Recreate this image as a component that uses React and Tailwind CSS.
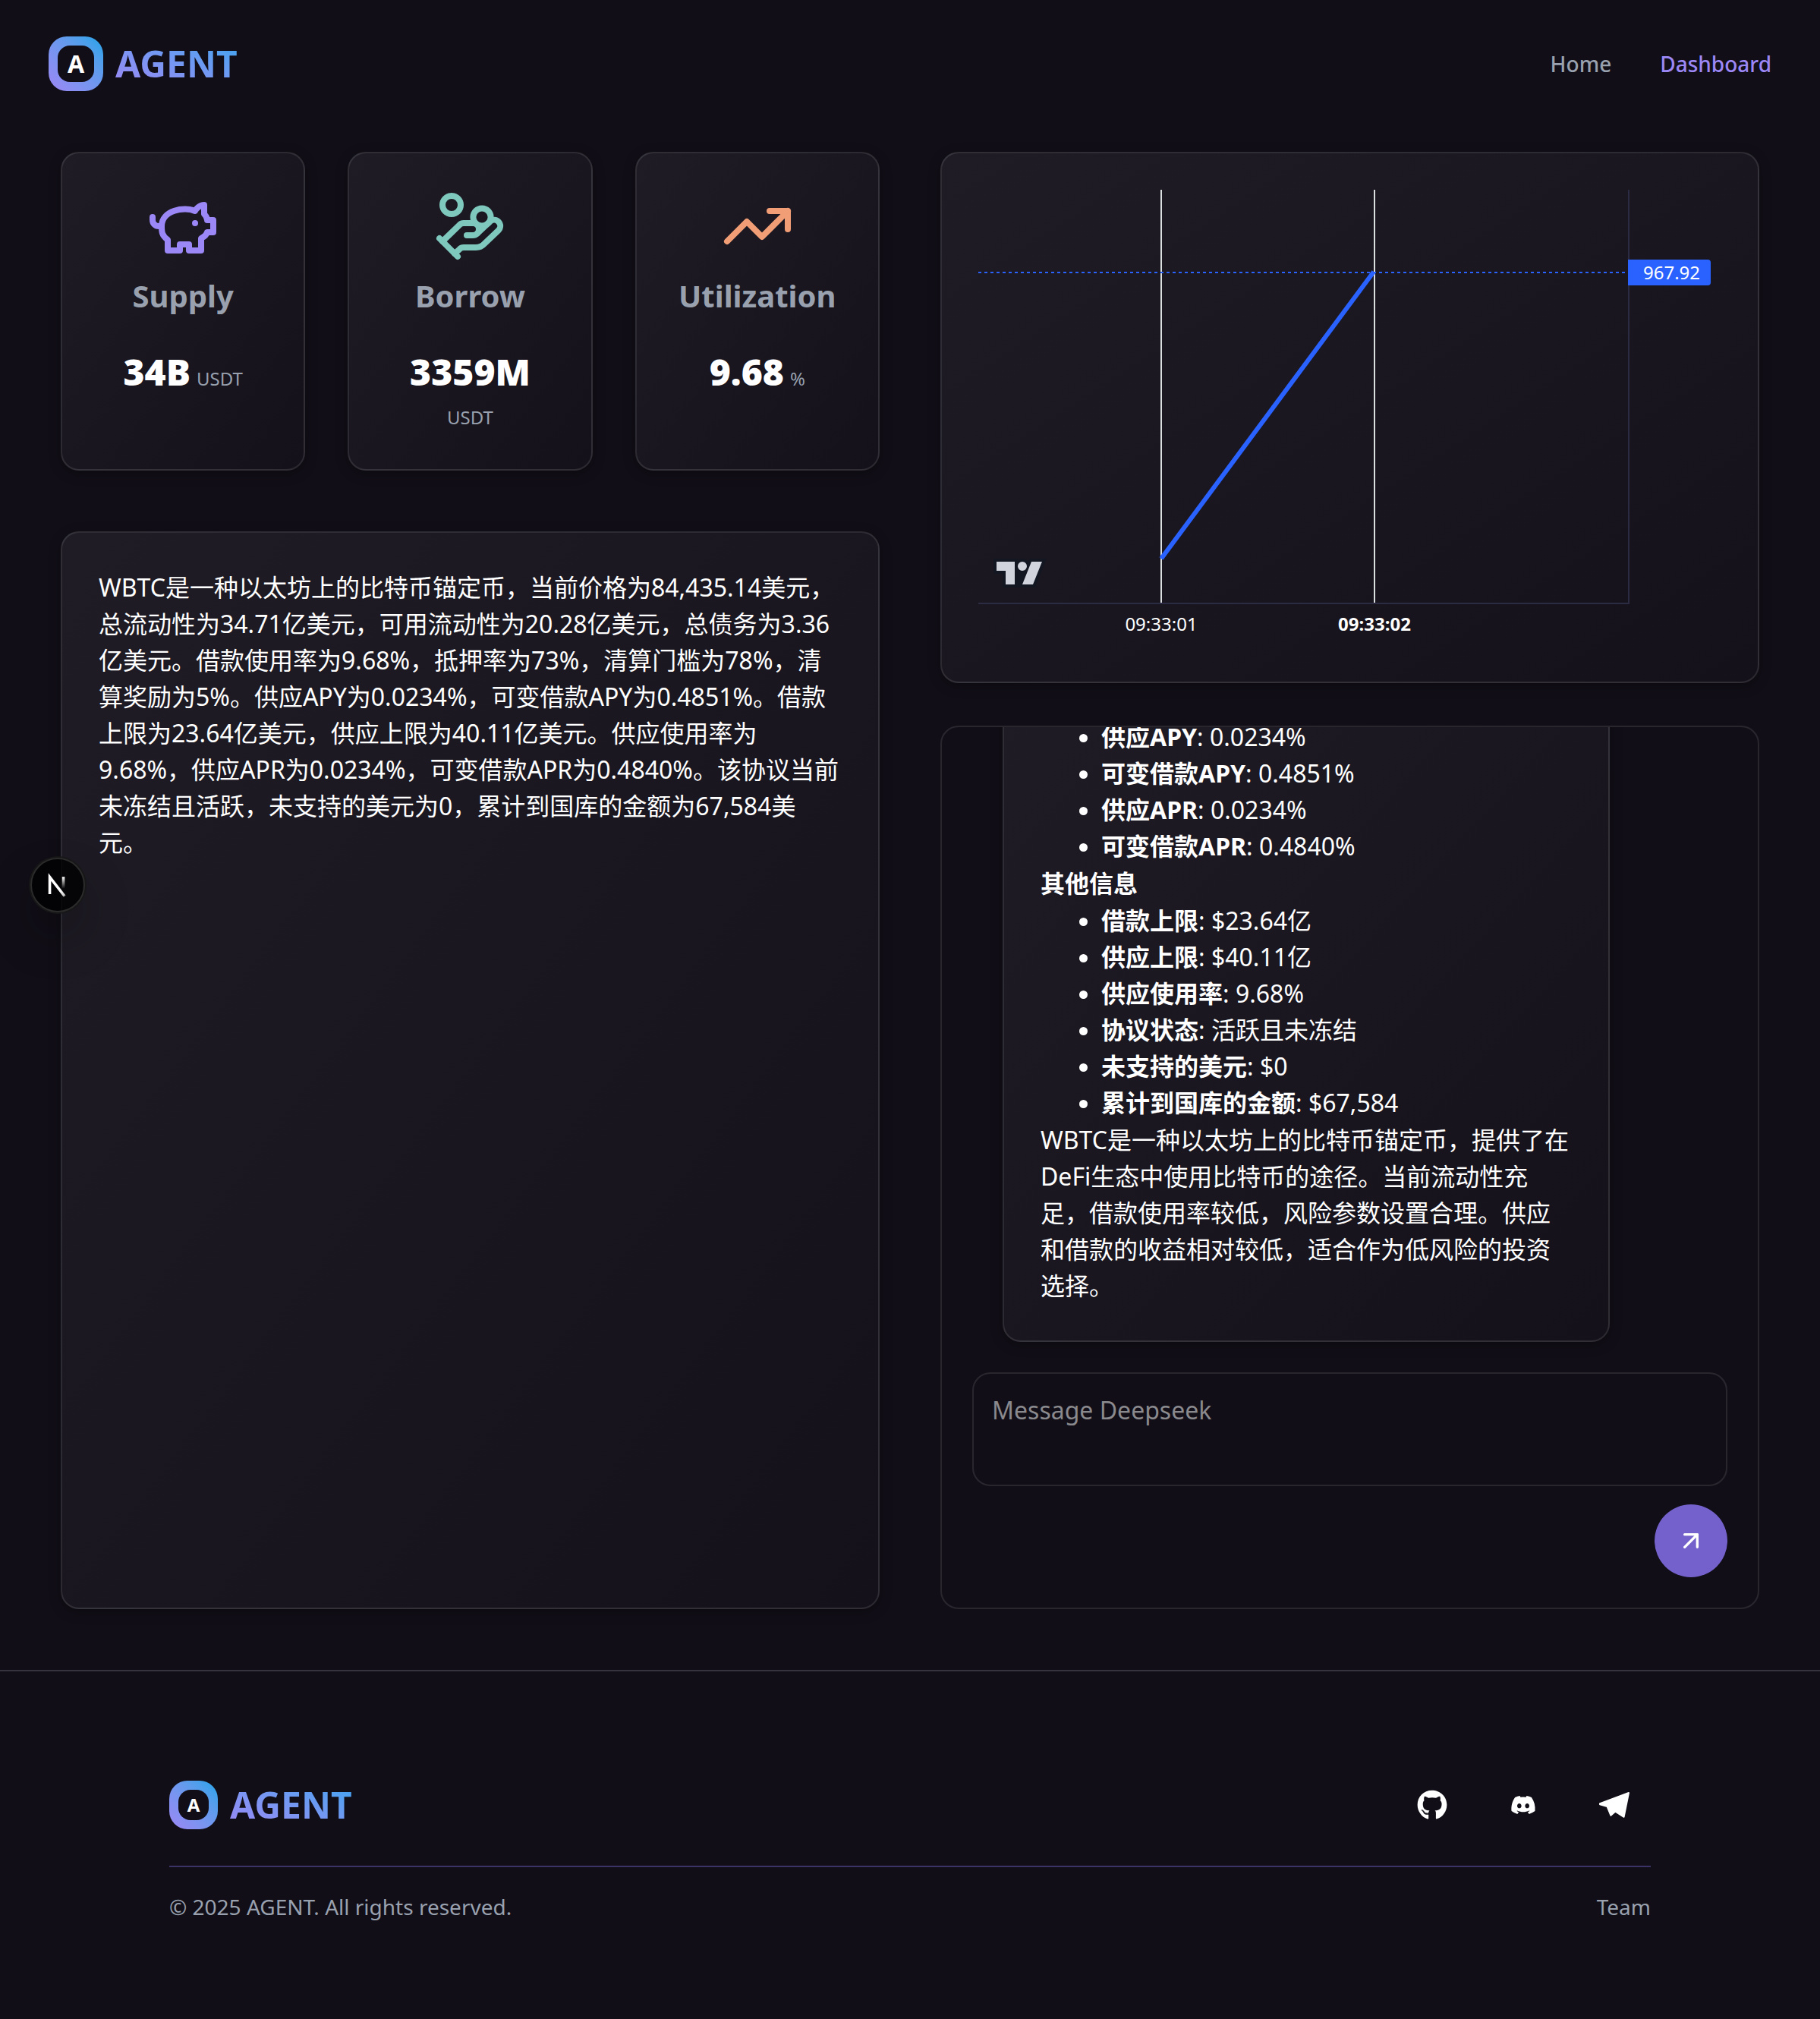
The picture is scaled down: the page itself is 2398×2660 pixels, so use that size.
import React from "react";
import { HandCoins, TrendingUp, ArrowUpRight } from "lucide-react";
import { FaGithub, FaDiscord } from "react-icons/fa";

const card =
  "rounded-3xl border-2 border-white/10 bg-linear-to-br from-[#1f1c25] to-[#14111a] shadow-[0_4px_16px_rgba(0,0,0,0.28)]";

function PiggyBank({ size, className }) {
  return (
    <svg
      viewBox="0 0 24 24"
      width={size}
      height={size}
      className={className}
      fill="none"
      stroke="currentColor"
      strokeWidth="2"
      strokeLinecap="round"
      strokeLinejoin="round"
    >
      <path d="M19 5c-1.5 0-2.8 1.4-3 2-3.5-1.5-11-.3-11 5 0 1.8 0 3 2 4.5V20h4v-2h3v2h4v-4c1-.5 1.7-1 2-2h2v-4h-2c0-1-.5-1.5-1-2V5z" />
      <path d="M2 9v1c0 1.1.9 2 2 2h1" />
      <path d="M16 11h.01" />
    </svg>
  );
}

function Logo({ small }) {
  return (
    <a href="#" className="flex items-center gap-4">
      <span
        className={
          small
            ? "flex size-16 items-center justify-center rounded-3xl bg-linear-to-tr from-[#9b87f5] to-[#0ea5e9]"
            : "flex size-[72px] items-center justify-center rounded-3xl bg-linear-to-tr from-[#9b87f5] to-[#0ea5e9]"
        }
      >
        <span
          className={
            small
              ? "flex size-10 items-center justify-center rounded-2xl bg-[#110e17] text-2xl font-bold"
              : "flex size-12 items-center justify-center rounded-2xl bg-[#110e17] text-[32px] font-bold"
          }
        >
          A
        </span>
      </span>
      <span className="bg-linear-to-tr from-[#9b87f5] to-[#33a5f0] bg-clip-text text-[48px] leading-[64px] font-bold text-transparent">
        AGENT
      </span>
    </a>
  );
}

function Header() {
  return (
    <header className="flex items-center justify-between px-16 py-12">
      <Logo />
      <nav className="flex gap-16 text-[28px] leading-10 font-medium">
        <a href="#" className="text-gray-400">Home</a>
        <a href="#" className="text-[#9b87f5]">Dashboard</a>
      </nav>
    </header>
  );
}

const stats = [
  { title: "Supply", value: "34B", unit: "USDT", Icon: PiggyBank, color: "text-[#9b87f5]" },
  { title: "Borrow", value: "3359M", unit: "USDT", Icon: HandCoins, color: "text-[#7ec8bd]" },
  { title: "Utilization", value: "9.68", unit: "%", Icon: TrendingUp, color: "text-[#f19e76]" },
];

function Stat({ title, value, unit, Icon, color }) {
  return (
    <section className={`${card} flex flex-col items-center p-12`}>
      <Icon size={96} className={color} />
      <h3 className="mt-4 text-[40px] leading-[56px] font-bold text-gray-400">{title}</h3>
      <div className="mt-10 flex flex-wrap items-baseline justify-center gap-2">
        <span className="text-[48px] leading-[64px] font-black">{value}</span>
        <span className="text-2xl leading-10 text-gray-400">{unit}</span>
      </div>
    </section>
  );
}

function Chart() {
  return (
    <section className={`${card} p-12`}>
      <svg viewBox="0 0 979 600" className="block w-full" role="img" aria-label="Price chart">
        <path d="M241 0V544M522 0V544" stroke="#dcdfe0" strokeWidth="2" />
        <path d="M0 545H858M857 0V545" stroke="#2b2b43" strokeWidth="2" />
        <path d="M0 109H857" stroke="#2962ff" strokeWidth="2" strokeDasharray="4 4" />
        <path d="M241 486L521 108" stroke="#2962ff" strokeWidth="6" />
        <path d="M856 92H961a4 4 0 0 1 4 4V122a4 4 0 0 1-4 4H856Z" fill="#2962ff" />
        <g fill="#fff" fontSize="24">
          <text x="876" y="118">967.92</text>
          <text x="241" y="581" textAnchor="middle">09:33:01</text>
          <text x="522" y="581" textAnchor="middle" fontWeight="700">09:33:02</text>
        </g>
        <g transform="translate(20 486) scale(2)">
          <path
            d="M2 0H0v10h6v9h21.4l.5-1.3 6-15 1-2.7H23.7l-.5 1.3-.2.6a5 5 0 0 0-7-.9V0H2z"
            fill="#131722"
          />
          <path
            d="M14 2H2v6h6v9h6V2zm12 15h-7l6-15h7l-6 15zm-7-9a3 3 0 1 0 0-6 3 3 0 0 0 0 6z"
            fill="#d1d4dc"
          />
        </g>
      </svg>
    </section>
  );
}

function DevBadge() {
  return (
    <button
      aria-label="Open developer tools"
      className="absolute top-[428px] -left-[42px] flex size-[72px] items-center justify-center rounded-full border-2 border-[#2b2b2b] bg-black/80 shadow-[0_0_0_2px_#171717,0_32px_64px_rgba(0,0,0,0.24)]"
    >
      <svg viewBox="0 0 40 40" className="size-[72px] shrink-0" fill="none">
        <defs>
          <linearGradient id="diag" x1="9.95" y1="11.1" x2="14.4" y2="16.6" gradientUnits="userSpaceOnUse">
            <stop stopColor="#fff" />
            <stop offset="0.6" stopColor="#fff" stopOpacity="0.8" />
            <stop offset="1" stopColor="#fff" stopOpacity="0" />
          </linearGradient>
          <linearGradient id="stem" x1="11.8" y1="1.06" x2="11.79" y2="9.63" gradientUnits="userSpaceOnUse">
            <stop stopColor="#fff" />
            <stop offset="1" stopColor="#fff" stopOpacity="0" />
          </linearGradient>
        </defs>
        <g transform="translate(11.8 13)" strokeWidth="2">
          <path d="M13.3 15.2L2.4 1.2V13.6" stroke="url(#diag)" />
          <path d="M12.4 1V12" stroke="url(#stem)" />
        </g>
      </svg>
    </button>
  );
}

const rates = [
  ["供应APY", "0.0234%"],
  ["可变借款APY", "0.4851%"],
  ["供应APR", "0.0234%"],
  ["可变借款APR", "0.4840%"],
];

const others = [
  ["借款上限", "$23.64亿"],
  ["供应上限", "$40.11亿"],
  ["供应使用率", "9.68%"],
  ["协议状态", "活跃且未冻结"],
  ["未支持的美元", "$0"],
  ["累计到国库的金额", "$67,584"],
];

function Facts({ items }) {
  return (
    <ul className="list-disc py-px pl-20">
      {items.map(([name, value]) => (
        <li key={name}>
          <strong>{name}</strong>: {value}
        </li>
      ))}
    </ul>
  );
}

function Chat() {
  return (
    <section className="flex min-h-0 flex-col overflow-hidden rounded-3xl border-2 border-white/10 px-10 pb-10">
      <div className="flex h-[810px] flex-col justify-end px-10">
        <div className={`${card} w-[800px] max-w-full p-12 text-[32px] leading-[48px]`}>
          <Facts items={rates} />
          <h4 className="font-bold">其他信息</h4>
          <Facts items={others} />
          <p>
            WBTC是一种以太坊上的比特币锚定币，提供了在DeFi生态中使用比特币的途径。当前流动性充足，借款使用率较低，风险参数设置合理。供应和借款的收益相对较低，适合作为低风险的投资选择。
          </p>
        </div>
      </div>
      <textarea
        aria-label="Message"
        placeholder="Message Deepseek"
        className="mt-10 block h-[150px] w-full shrink-0 resize-none rounded-3xl border-2 border-white/10 bg-transparent p-6 text-[32px] leading-[48px] placeholder:text-[#8a898d]"
      />
      <button
        aria-label="Send"
        className="mt-6 flex size-24 shrink-0 items-center justify-center self-end rounded-full bg-[#7561cb]"
      >
        <ArrowUpRight size={40} strokeWidth={2} />
      </button>
    </section>
  );
}

function PaperPlane() {
  return (
    <svg viewBox="0 0 40 40" className="size-10" fill="currentColor" stroke="currentColor" strokeWidth="2" strokeLinejoin="round">
      <path d="M1 18.2L39 4L32.6 35.8L21.4 28.6L15.4 33.8L10.6 22L1 19.2Z" />
    </svg>
  );
}

function Footer() {
  return (
    <footer className="border-t-2 border-[#36333f]">
      <div className="mx-auto max-w-[2048px] px-12 pt-36 pb-32">
        <div className="flex items-center justify-between pb-12">
          <Logo small />
          <div className="flex items-center gap-6">
            <a href="#" aria-label="GitHub" className="flex w-24 justify-center"><FaGithub size={40} /></a>
            <a href="#" aria-label="Discord" className="flex w-24 justify-center"><FaDiscord size={34} /></a>
            <a href="#" aria-label="Telegram" className="flex w-24 justify-center"><PaperPlane /></a>
          </div>
        </div>
        <div className="flex justify-between border-t-2 border-[#3b3366] pt-8 text-[28px] leading-10 text-gray-400">
          <p>© 2025 AGENT. All rights reserved.</p>
          <a href="#">Team</a>
        </div>
      </div>
    </footer>
  );
}

export default function App() {
  return (
    <div
      lang="zh-CN"
      className="min-h-screen bg-[#110e17] font-['Noto_Sans','Noto_Sans_CJK_SC',sans-serif] text-white"
    >
      <Header />
      <main className="grid grid-cols-2 gap-20 px-20 pt-8 pb-20">
        <div className="flex flex-col gap-20">
          <div className="grid grid-cols-3 gap-14">
            {stats.map((s) => (
              <Stat key={s.title} {...s} />
            ))}
          </div>
          <section className={`${card} relative grow p-12 text-[32px] leading-[48px]`}>
            <p>
              WBTC是一种以太坊上的比特币锚定币，当前价格为84,435.14美元，总流动性为34.71亿美元，可用流动性为20.28亿美元，总债务为3.36亿美元。借款使用率为9.68%，抵押率为73%，清算门槛为78%，清算奖励为5%。供应APY为0.0234%，可变借款APY为0.4851%。借款上限为23.64亿美元，供应上限为40.11亿美元。供应使用率为9.68%，供应APR为0.0234%，可变借款APR为0.4840%。该协议当前未冻结且活跃，未支持的美元为0，累计到国库的金额为67,584美元。
            </p>
            <DevBadge />
          </section>
        </div>
        <div className="flex flex-col gap-14">
          <Chart />
          <Chat />
        </div>
      </main>
      <Footer />
    </div>
  );
}
